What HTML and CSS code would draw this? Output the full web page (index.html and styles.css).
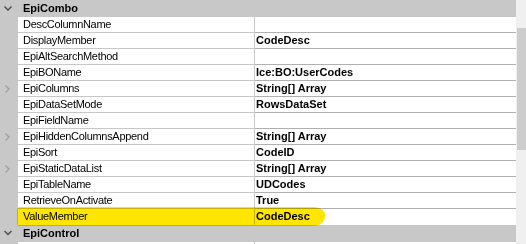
FILE: index.html
```html
<!DOCTYPE html>
<html lang="en">
<head>
  <meta charset="UTF-8" />
  <title>Property Grid</title>
  <link rel="stylesheet" href="styles.css">
</head>
<body>

  <div id="janela">
    <div id="grade">

      <div class="categoria">
        <div class="seta"><svg width="18" height="17" viewBox="0 0 18 17"><path d="M4.5 6.5 L8 10 L11.5 6.5" fill="none" stroke="#4a4a4a" stroke-width="1.4"/></svg></div>
        <div class="titulo">EpiCombo</div>
      </div>

      <div class="linha"><div class="margem"></div><div class="nome">DescColumnName</div><div class="valor"></div></div>
      <div class="linha"><div class="margem"></div><div class="nome">DisplayMember</div><div class="valor">CodeDesc</div></div>
      <div class="linha"><div class="margem"></div><div class="nome">EpiAltSearchMethod</div><div class="valor"></div></div>
      <div class="linha"><div class="margem"></div><div class="nome">EpiBOName</div><div class="valor">Ice:BO:UserCodes</div></div>
      <div class="linha"><div class="margem"><svg width="18" height="16" viewBox="0 0 18 16"><path d="M5.5 4.5 L9 8 L5.5 11.5" fill="none" stroke="#a2a2a2" stroke-width="1.4"/></svg></div><div class="nome">EpiColumns</div><div class="valor">String[] Array</div></div>
      <div class="linha"><div class="margem"></div><div class="nome">EpiDataSetMode</div><div class="valor">RowsDataSet</div></div>
      <div class="linha"><div class="margem"></div><div class="nome">EpiFieldName</div><div class="valor"></div></div>
      <div class="linha"><div class="margem"><svg width="18" height="16" viewBox="0 0 18 16"><path d="M5.5 4.5 L9 8 L5.5 11.5" fill="none" stroke="#a2a2a2" stroke-width="1.4"/></svg></div><div class="nome">EpiHiddenColumnsAppend</div><div class="valor">String[] Array</div></div>
      <div class="linha"><div class="margem"></div><div class="nome">EpiSort</div><div class="valor">CodeID</div></div>
      <div class="linha"><div class="margem"><svg width="18" height="16" viewBox="0 0 18 16"><path d="M5.5 4.5 L9 8 L5.5 11.5" fill="none" stroke="#a2a2a2" stroke-width="1.4"/></svg></div><div class="nome">EpiStaticDataList</div><div class="valor">String[] Array</div></div>
      <div class="linha"><div class="margem"></div><div class="nome">EpiTableName</div><div class="valor">UDCodes</div></div>
      <div class="linha"><div class="margem"></div><div class="nome">RetrieveOnActivate</div><div class="valor">True</div></div>
      <div class="linha marcada">
        <div class="margem"></div><div class="nome">ValueMember</div><div class="valor">CodeDesc</div>
        <div class="marca"></div>
      </div>

      <div class="categoria">
        <div class="seta"><svg width="18" height="16" viewBox="0 0 18 16"><path d="M4.5 6 L8 9.5 L11.5 6" fill="none" stroke="#4a4a4a" stroke-width="1.4"/></svg></div>
        <div class="titulo">EpiControl</div>
      </div>

      <div class="linha"><div class="margem"></div><div class="nome"></div><div class="valor"></div></div>
    </div>

    <div id="rolagem">
      <div id="polegar"></div>
    </div>
  </div>

</body>
</html>
```

FILE: styles.css
```css
body {
  margin: 0;
  background: #fff;
  font-family: 'Liberation Sans', Arial, sans-serif;
  font-size: 11px;
  color: #000;
  overflow: hidden;
}

#janela {
  display: flex;
  height: 244px;
  overflow: hidden;
}

#grade {
  width: 516px;
  background: #fff;
}

.categoria {
  display: flex;
  height: 17px;
  background: #c8c8c8;
  line-height: 17px;
}

.seta {
  width: 18px;
  height: 16px;
}

.titulo {
  padding-left: 5px;
  font-weight: bold;
  font-size: 11px;
}

.linha {
  display: flex;
  height: 16px;
  position: relative;
}

.margem {
  width: 18px;
  flex: none;
  background: #c8c8c8;
}

.nome {
  width: 231px;
  flex: none;
  padding-left: 5px;
  border-right: 1px solid #c8c8c8;
  border-bottom: 1px solid #c8c8c8;
  line-height: 15px;
  letter-spacing: -0.3px;
  white-space: nowrap;
}

.valor {
  flex: 1;
  padding-left: 1px;
  border-bottom: 1px solid #b0b0b0;
  line-height: 15px;
  font-weight: bold;
  white-space: nowrap;
}

.marcada .nome,
.marcada .valor {
  border-bottom-color: transparent;
}

.marca {
  position: absolute;
  left: 17px;
  top: -2px;
  width: 308px;
  height: 19px;
  background: #ffe600;
  mix-blend-mode: multiply;
  border-radius: 3px 12px 10px 2px / 3px 8px 10px 3px;
}

#rolagem {
  flex: 1;
  background: #f0f0f0;
  padding-top: 28px;
  padding-left: 1px;
}

#polegar {
  height: 122px;
  background: #cdcdcd;
}
```
